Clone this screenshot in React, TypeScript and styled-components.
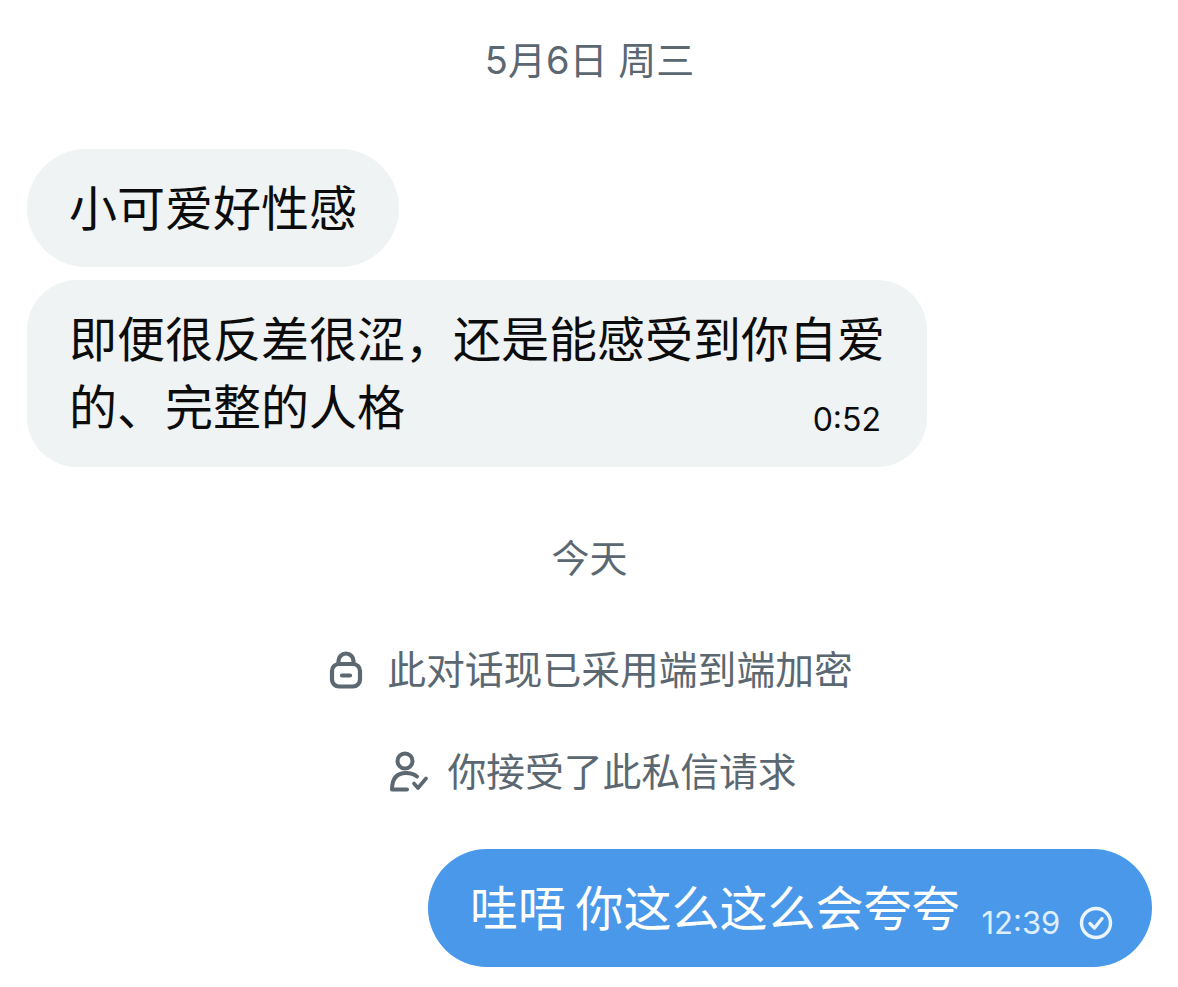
import React from "react";
import styled, { createGlobalStyle } from "styled-components";

const Global = createGlobalStyle`
  html, body { margin: 0; background: #fff; }
  body { font-family: "Inter", "Noto Sans CJK SC", sans-serif; }
`;

const Page = styled.main`
  width: 1178px;
  height: 987px;
  box-sizing: border-box;
  padding: 0 26px 0 27px;
  display: flex;
  flex-direction: column;
  overflow: hidden;
`;

const Notice = styled.div<{ $top: number; $height: number; $size?: number; $gap?: number; $shift?: number }>`
  margin-top: ${(p) => p.$top}px;
  height: ${(p) => p.$height}px;
  padding-left: ${(p) => p.$shift ?? 0}px;
  display: flex;
  align-items: center;
  justify-content: center;
  gap: ${(p) => p.$gap ?? 0}px;
  color: #5b6771;
  font-size: ${(p) => p.$size ?? 38}px;
  line-height: 1;
  white-space: pre;
`;

const Bubble = styled.div<{ $top: number; $width: number; $height: number }>`
  margin-top: ${(p) => p.$top}px;
  width: ${(p) => p.$width}px;
  height: ${(p) => p.$height}px;
  box-sizing: border-box;
  border-radius: 59px;
  background: #eff3f4;
  color: #0c0c0c;
  padding: 0 40px 0 42px;
  font-size: 48px;
  line-height: 68px;
`;

const SingleLine = styled(Bubble)`
  display: flex;
  align-items: center;
  white-space: nowrap;
  padding-top: 2px;
`;

const MultiLine = styled(Bubble)`
  padding-top: 26px;
  border-radius: 50px;
`;

const TextLine = styled.div`
  display: flex;
  white-space: nowrap;
`;

const ReceivedTime = styled.span`
  margin-left: auto;
  margin-top: 23px;
  padding-right: 6px;
  font-size: 32px;
  line-height: 45px;
`;

const SentBubble = styled(SingleLine)`
  align-self: flex-end;
  background: #4a98ea;
  color: #fff;
  padding-right: 38px;
  word-spacing: -4px;
`;

const SentMeta = styled.div`
  display: flex;
  align-items: center;
  gap: 19px;
  margin-left: 22px;
  margin-top: 28px;
  font-size: 31px;
  color: #dfeefc;
  line-height: 40px;
`;

const NoticeIcon = styled.svg`
  display: block;
  flex: none;
  fill: none;
  stroke: #5b6771;
  stroke-linecap: round;
  stroke-linejoin: round;
`;

const Lock = () => (
  <NoticeIcon width="34" height="38" viewBox="0 0 34 38" strokeWidth="4.2">
    <rect x="3" y="13" width="28" height="22.500" rx="7" />
    <path d="M9.500 13V10a7.500 7.500 0 0 1 15 0v3" />
    <path d="M13 24.500h8" />
  </NoticeIcon>
);

const Accepted = () => (
  <NoticeIcon width="40" height="42" viewBox="0 0 40 42" strokeWidth="4">
    <circle cx="17" cy="10" r="7.500" />
    <path d="M29 25.500c-3-2.500-7-3.500-11-3.500C10 22 4 26 4 38.500h15" />
    <path d="M26 32.500l4 4.500L38 27.500" strokeWidth="3.600" />
  </NoticeIcon>
);

const Sent = () => (
  <svg width="34" height="34" viewBox="0 0 34 34" fill="none" stroke="#eaf4fe" strokeWidth="3.400" strokeLinecap="round" strokeLinejoin="round">
    <circle cx="17" cy="17" r="14.500" />
    <path d="M11 17.500l4.500 4.500L23 12.500" />
  </svg>
);

export default function App() {
  return (
    <Page>
      <Global />
      <Notice $top={38} $height={44}>5月6日 周三</Notice>
      <SingleLine $top={67} $width={372} $height={118}>小可爱好性感</SingleLine>
      <MultiLine $top={13} $width={900} $height={187}>
        <TextLine>即便很反差很涩，还是能感受到你自爱</TextLine>
        <TextLine>的、完整的人格<ReceivedTime>0:52</ReceivedTime></TextLine>
      </MultiLine>
      <Notice $top={69} $height={44}>今天</Notice>
      <Notice $top={68} $height={44} $size={38.800} $gap={24} $shift={3}><Lock />此对话现已采用端到端加密</Notice>
      <Notice $top={58} $height={44} $size={38.800} $gap={19} $shift={6}><Accepted />你接受了此私信请求</Notice>
      <SentBubble $top={55} $width={724} $height={118}>
        哇唔 你这么这么会夸夸
        <SentMeta>12:39<Sent /></SentMeta>
      </SentBubble>
    </Page>
  );
}
